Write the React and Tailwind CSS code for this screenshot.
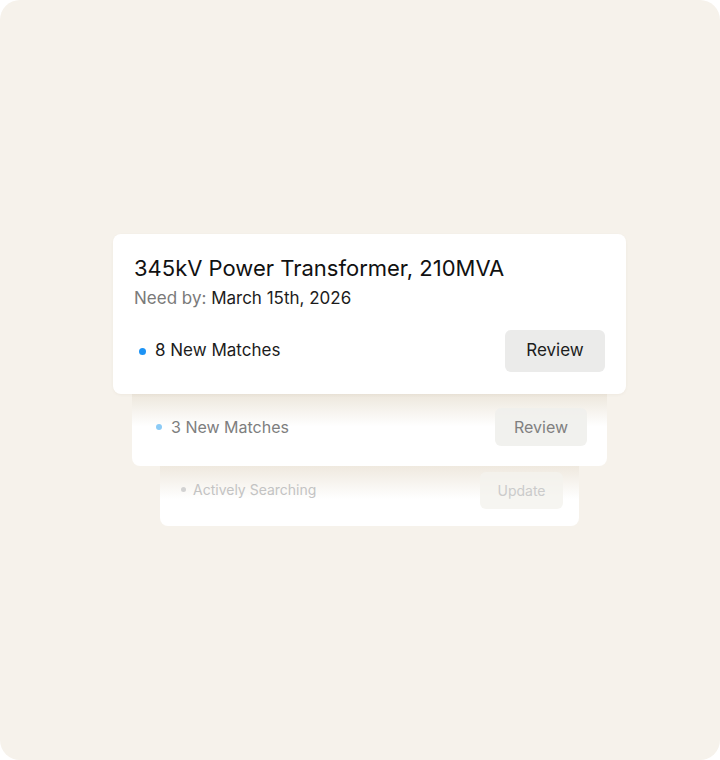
import React from 'react';

const App = () => {
    return (
        <div className="w-[720px] h-[760px] bg-white font-['Inter',sans-serif]">
            <div className="w-[720px] h-[760px] rounded-[20px] bg-[#f6f2eb] flex flex-col items-center justify-center pl-[19px]">
                {/* front card */}
                <div className="relative z-30 w-[513px] h-[160px] bg-white rounded-lg px-[21px] pt-[20px] shadow-[0_1px_3px_rgba(120,100,60,0.06)]">
                    <h1 className="text-[22px] leading-[28px] text-[#111]">345kV Power Transformer, 210MVA</h1>
                    <p className="mt-[4px] text-[17px] leading-[24px] text-[#1c1c1c]">
                        <span className="text-[#7a7a7a]">Need by:</span> March 15th, 2026
                    </p>
                    <div className="mt-[20px] flex items-center justify-between">
                        <div className="flex items-center gap-[9px] pl-[5px]">
                            <span className="w-[7px] h-[7px] rounded-full bg-[#1d93f5]" />
                            <span className="text-[17px] text-[#1c1c1c]">8 New Matches</span>
                        </div>
                        <button className="w-[100px] h-[42px] rounded-md bg-[#ebebea] text-[17px] text-[#1c1c1c]">Review</button>
                    </div>
                </div>

                {/* second card */}
                <div className="relative z-20 w-[475px] h-[72px] rounded-b-lg bg-gradient-to-b from-[#ede7dc] via-white via-[45%] to-white px-[20px] pb-[20px] flex items-end justify-between">
                    <div className="flex items-center gap-[9px] pl-[4px] mb-[7px]">
                        <span className="w-[6px] h-[6px] rounded-full bg-[#8ccbf6]" />
                        <span className="text-[16px] text-[#7e7e7e]">3 New Matches</span>
                    </div>
                    <button className="w-[92px] h-[38px] rounded-md bg-[#f0efec]/90 text-[16px] text-[#808080]">Review</button>
                </div>

                {/* third card */}
                <div className="relative z-10 w-[419px] h-[60px] rounded-b-lg bg-gradient-to-b from-[#efe9df] via-white via-[55%] to-white px-[16px] pb-[17px] flex items-end justify-between">
                    <div className="flex items-center gap-[7px] pl-[5px] mb-[9px]">
                        <span className="w-[5px] h-[5px] rounded-full bg-[#d2d2d2]" />
                        <span className="text-[14px] text-[#c3c3c3]">Actively Searching</span>
                    </div>
                    <button className="w-[83px] h-[37px] rounded-md bg-[#f4f2ee]/80 text-[14px] text-[#cbcbcb]">Update</button>
                </div>
            </div>
        </div>
    );
};

export default App;
